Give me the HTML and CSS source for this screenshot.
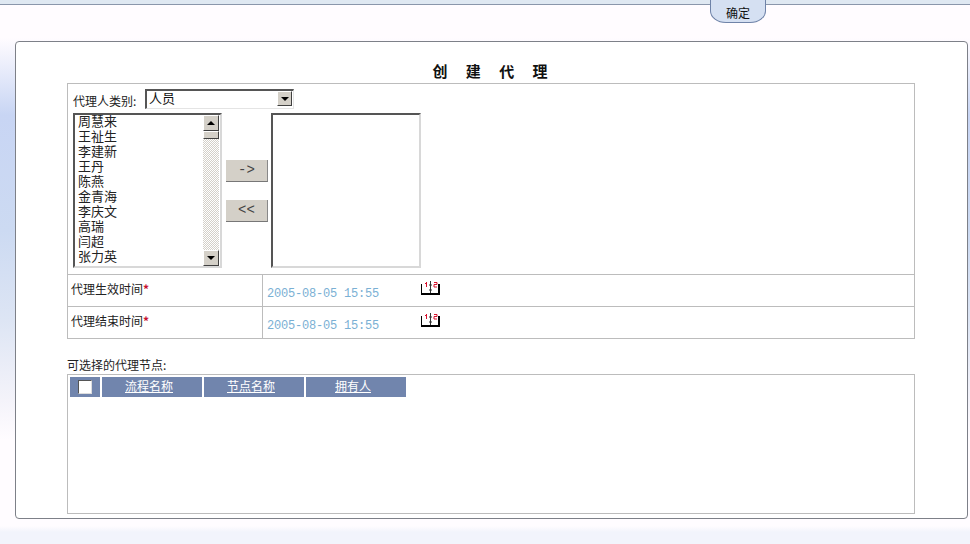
FILE: index.html
```html
<!DOCTYPE html>
<html>
  <head>
    <title>创建代理</title>
    <link rel="stylesheet" href="styles.css">
  </head>
  <body>
    <div class="topbar">
      <div class="ok-button">确定</div>
    </div>
    <div class="panel">
      <h1 class="title">创 建 代 理</h1>
      <div class="form-table">
        <div class="picker-row">
          <div class="type-row">
            <span class="type-label">代理人类别:</span>
            <div class="combo">
              <span class="combo-value">人员</span>
              <span class="win-button combo-arrow"><span class="arrow-down"></span></span>
            </div>
          </div>
          <div class="picker">
            <div class="listbox">
              <div class="list-items">
                <div class="list-item">周慧来</div>
                <div class="list-item">王祉生</div>
                <div class="list-item">李建新</div>
                <div class="list-item">王丹</div>
                <div class="list-item">陈燕</div>
                <div class="list-item">金青海</div>
                <div class="list-item">李庆文</div>
                <div class="list-item">高瑞</div>
                <div class="list-item">闫超</div>
                <div class="list-item">张力英</div>
              </div>
              <div class="scrollbar">
                <span class="win-button scroll-btn"><span class="arrow-up"></span></span>
                <span class="win-button scroll-thumb"></span>
                <span class="scroll-track"></span>
                <span class="win-button scroll-btn"><span class="arrow-down"></span></span>
              </div>
            </div>
            <div class="move-buttons">
              <div class="move-button">-&gt;</div>
              <div class="move-button">&lt;&lt;</div>
            </div>
            <div class="listbox listbox-target"></div>
          </div>
        </div>
        <div class="date-row">
          <div class="date-label">代理生效时间<span class="required">*</span></div>
          <div class="date-cell">
            <span class="date-value">2005-08-05 15:55</span>
            <svg class="cal-icon" width="20" height="15" viewBox="0 0 20 15">
              <path d="M0.500 3v10" stroke="#000" stroke-width="1"/>
              <path d="M18 3v9" stroke="#000" stroke-width="2"/>
              <path d="M0 13h19" stroke="#000" stroke-width="2"/>
              <path d="M9.500 0v12M8 4h3M8 9h3" fill="none" stroke="#333" stroke-width="1"/>
              <path d="M5.500 1v5M4 2.500h1" fill="none" stroke="#d8102c" stroke-width="1"/>
              <path d="M13 1.500h3v2h-3v2.500h3" fill="none" stroke="#d8102c" stroke-width="1"/>
            </svg>
          </div>
        </div>
        <div class="date-row">
          <div class="date-label">代理结束时间<span class="required">*</span></div>
          <div class="date-cell">
            <span class="date-value">2005-08-05 15:55</span>
            <svg class="cal-icon" width="20" height="15" viewBox="0 0 20 15">
              <path d="M0.500 3v10" stroke="#000" stroke-width="1"/>
              <path d="M18 3v9" stroke="#000" stroke-width="2"/>
              <path d="M0 13h19" stroke="#000" stroke-width="2"/>
              <path d="M9.500 0v12M8 4h3M8 9h3" fill="none" stroke="#333" stroke-width="1"/>
              <path d="M5.500 1v5M4 2.500h1" fill="none" stroke="#d8102c" stroke-width="1"/>
              <path d="M13 1.500h3v2h-3v2.500h3" fill="none" stroke="#d8102c" stroke-width="1"/>
            </svg>
          </div>
        </div>
      </div>
      <div class="nodes-label">可选择的代理节点:</div>
      <div class="nodes-box">
        <div class="nodes-head">
          <div class="head-cell head-check"><span class="checkbox"></span></div>
          <div class="head-cell head-wide"><a href="#">流程名称</a></div>
          <div class="head-cell head-wide"><a href="#">节点名称</a></div>
          <div class="head-cell head-wide"><a href="#">拥有人</a></div>
        </div>
      </div>
    </div>
  </body>
</html>
```

FILE: styles.css
```css
body {
  margin: 0;
  height: 544px;
  overflow: hidden;
  font-family: "Noto Sans CJK SC", sans-serif;
  font-size: 12px;
  color: #111;
  background: linear-gradient(180deg, #fffcff 38px, #c8d5f4 115px, #ccdaf2 230px, #dde5f4 320px, #f4f3fa 400px, #fffcff 440px, #fffcff 526px, #f2f4fc 532px);
}
.topbar {
  height: 4px;
  background-color: #dfe8f2;
  border-bottom: 1px solid #8a96ab;
  display: flex;
  justify-content: flex-end;
  padding-right: 204px;
}
.ok-button {
  width: 54px;
  height: 22px;
  background-color: #d5e0f2;
  border: 1px solid #6f83a8;
  border-top: none;
  border-radius: 0 0 16px 16px / 0 0 12px 12px;
  text-align: center;
  line-height: 26px;
  font-size: 12px;
  color: #111;
}
.panel {
  margin: 36px 2px 0 15px;
  height: 476px;
  background-color: #fff;
  border: 1px solid #7d8088;
  border-radius: 4px;
  padding: 0 51px;
}
.title {
  margin: 0;
  height: 41px;
  padding-left: 2px;
  line-height: 58px;
  text-align: center;
  font-size: 15px;
  font-weight: bold;
  letter-spacing: 5px;
  word-spacing: 5px;
  color: #111;
}
.form-table {
  border: 1px solid #bcbcbc;
  border-bottom: none;
  width: 846px;
  margin-bottom: 20px;
}
.picker-row {
  height: 190px;
  padding: 5px;
  box-sizing: border-box;
}
.type-row {
  display: flex;
  align-items: flex-end;
  height: 20px;
  margin-bottom: 4px;
}
.type-label {
  width: 72px;
  line-height: 17px;
  color: #222;
}
.combo {
  width: 149px;
  height: 20px;
  box-sizing: border-box;
  background-color: #fff;
  border: 1px solid #e4e4e4;
  border-top: 2px solid #555;
  border-left: 2px solid #555;
  display: flex;
  justify-content: space-between;
}
.combo-value {
  padding-left: 2px;
  font-size: 13px;
  line-height: 13px;
}
.combo-arrow {
  width: 15px;
  height: 15px;
  margin: 0 1px;
}
.win-button {
  display: flex;
  align-items: center;
  justify-content: center;
  box-sizing: border-box;
  background-color: #d4d0c8;
  border: 1px solid #fff;
  border-right-color: #404040;
  border-bottom-color: #404040;
}
.arrow-down {
  width: 0;
  height: 0;
  border-left: 4px solid transparent;
  border-right: 4px solid transparent;
  border-top: 4px solid #000;
}
.arrow-up {
  width: 0;
  height: 0;
  border-left: 4px solid transparent;
  border-right: 4px solid transparent;
  border-bottom: 4px solid #000;
}
.picker {
  display: flex;
  align-items: flex-start;
}
.listbox {
  width: 149px;
  height: 155px;
  box-sizing: border-box;
  background-color: #fff;
  border: 2px solid #d8d8d8;
  border-top-color: #555;
  border-left-color: #555;
  display: flex;
  justify-content: space-between;
}
.listbox-target {
  width: 150px;
}
.list-items {
  margin-top: -2px;
  padding-left: 3px;
  font-size: 13px;
  color: #222;
}
.list-item {
  height: 15px;
  line-height: 15px;
}
.scrollbar {
  width: 16px;
  margin-right: 1px;
  display: flex;
  flex-direction: column;
}
.scroll-btn {
  height: 16px;
  flex: none;
}
.scroll-thumb {
  height: 8px;
  flex: none;
}
.scroll-track {
  flex: 1;
  background-color: #e9e7e3;
  background-image: repeating-conic-gradient(#d4d0c8 0 25%, #fff 0 50%);
  background-size: 2px 2px;
}
.move-buttons {
  width: 42px;
  margin: 47px 3px 0 4px;
  display: flex;
  flex-direction: column;
  gap: 18px;
}
.move-button {
  height: 22px;
  box-sizing: border-box;
  background-color: #d4d0c8;
  border-right: 1px solid #888;
  border-bottom: 1px solid #777;
  text-align: center;
  line-height: 20px;
  font-family: "Liberation Mono", monospace;
  font-size: 14px;
  color: #444;
}
.date-row {
  display: flex;
  height: 33px;
  box-sizing: border-box;
  border-top: 1px solid #bcbcbc;
  border-bottom: 1px solid #bcbcbc;
  margin-bottom: -1px;
}
.date-label {
  width: 191px;
  padding-left: 3px;
  border-right: 1px solid #bcbcbc;
  line-height: 27px;
  color: #222;
}
.required {
  color: #c8102e;
  font-weight: bold;
}
.date-cell {
  display: flex;
  align-items: flex-start;
  padding-left: 4px;
}
.date-value {
  width: 154px;
  margin-top: 10px;
  line-height: 18px;
  font-family: "Liberation Mono", monospace;
  font-size: 12px;
  letter-spacing: -0.2px;
  color: #7ab0d4;
}
.cal-icon {
  margin-top: 6px;
}
.nodes-label {
  height: 16px;
  line-height: 14px;
  color: #222;
}
.nodes-box {
  width: 842px;
  height: 134px;
  border: 1px solid #bcbcbc;
  padding: 2px;
}
.nodes-head {
  display: flex;
  gap: 2px;
}
.head-cell {
  height: 20px;
  background-color: #7185ad;
  text-align: center;
  line-height: 18px;
}
.head-cell a {
  color: #fff;
  text-decoration: underline;
}
.head-check {
  width: 30px;
  display: flex;
  align-items: center;
  justify-content: center;
}
.checkbox {
  width: 12px;
  height: 12px;
  background-color: #fff;
  border: 1px solid #555;
  border-right-color: #ddd;
  border-bottom-color: #ddd;
}
.head-wide {
  width: 100px;
  box-sizing: border-box;
  padding-right: 6px;
}
```
